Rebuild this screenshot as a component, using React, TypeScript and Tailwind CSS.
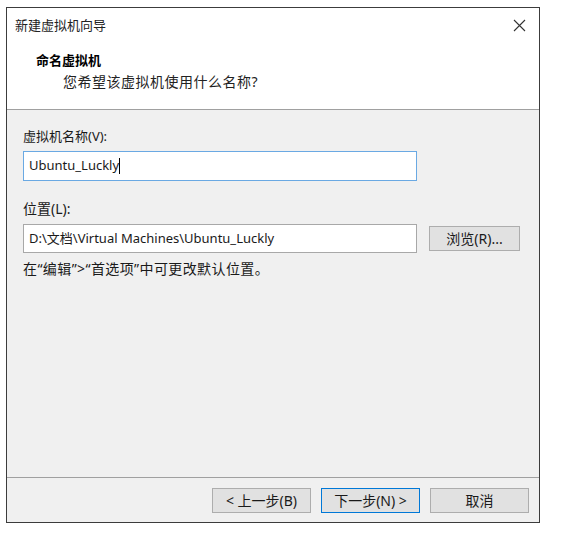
import React from 'react';

const font = { fontFamily: '"Noto Sans", "Noto Sans CJK SC", sans-serif' };

function WinButton({ children, primary = false, className = '' }: { children: React.ReactNode; primary?: boolean; className?: string }) {
  return (
    <div
      className={`flex items-center justify-center h-[25px] bg-[#e1e1e1] text-[14px] text-[#1a1a1a] border ${
        primary ? 'border-[#0078d7]' : 'border-[#adadad]'
      } ${className}`}
    >
      {children}
    </div>
  );
}

export default function App() {
  return (
    <div className="w-[564px] h-[536px] bg-white pt-[7px] pl-[6px]" style={font}>
      <div className="w-[534px] h-[516px] border border-[#3c3c3c] flex flex-col bg-[#f0f0f0]">
        {/* Title + header */}
        <div className="bg-white h-[102px] border-b border-[#a0a0a0] flex flex-col">
          <div className="flex items-center justify-between h-[36px] pl-[8px] pr-[13px]">
            <span className="text-[13px] text-[#222]">新建虚拟机向导</span>
            <svg width="13" height="13" viewBox="0 0 13 13" className="mt-[-2px]">
              <path d="M1 1 L12 12 M12 1 L1 12" stroke="#333" strokeWidth="1.1" />
            </svg>
          </div>
          <div className="pl-[29px] pt-[7px] text-[13px] font-bold text-black leading-[18px]">命名虚拟机</div>
          <div className="pl-[56px] pt-[4px] text-[14px] tracking-[0.5px] text-[#222] leading-[18px]">您希望该虚拟机使用什么名称?</div>
        </div>

        {/* Body */}
        <div className="flex-1 px-[16px] pt-[17px] text-[13px] text-[#1a1a1a]">
          <div className="leading-[18px]">虚拟机名称(V):</div>
          <div className="mt-[6px] w-[394px] h-[30px] bg-white border border-[#6aa9e3] flex items-center pl-[5px]">
            <span>Ubuntu_Luckly</span>
            <span className="inline-block w-px h-[16px] bg-black" />
          </div>
          <div className="mt-[19px] leading-[18px] text-[14px]">位置(L):</div>
          <div className="mt-[6px] flex items-center">
            <div className="w-[394px] h-[29px] bg-white border border-[#a8a8a8] flex items-center pl-[5px]">
              D:\文档\Virtual Machines\Ubuntu_Luckly
            </div>
            <WinButton className="ml-[12px] w-[91px]">浏览(R)...</WinButton>
          </div>
          <div className="mt-[7px] leading-[18px] text-[14px] tracking-[0.4px]">在“编辑”&gt;“首选项”中可更改默认位置。</div>
        </div>

        {/* Footer */}
        <div className="h-[45px] border-t border-[#a0a0a0] flex items-start justify-end pt-[10px] pr-[10px] gap-[10px]">
          <WinButton className="w-[99px]">&lt; 上一步(B)</WinButton>
          <WinButton primary className="w-[99px]">下一步(N) &gt;</WinButton>
          <WinButton className="w-[99px]">取消</WinButton>
        </div>
      </div>
    </div>
  );
}
